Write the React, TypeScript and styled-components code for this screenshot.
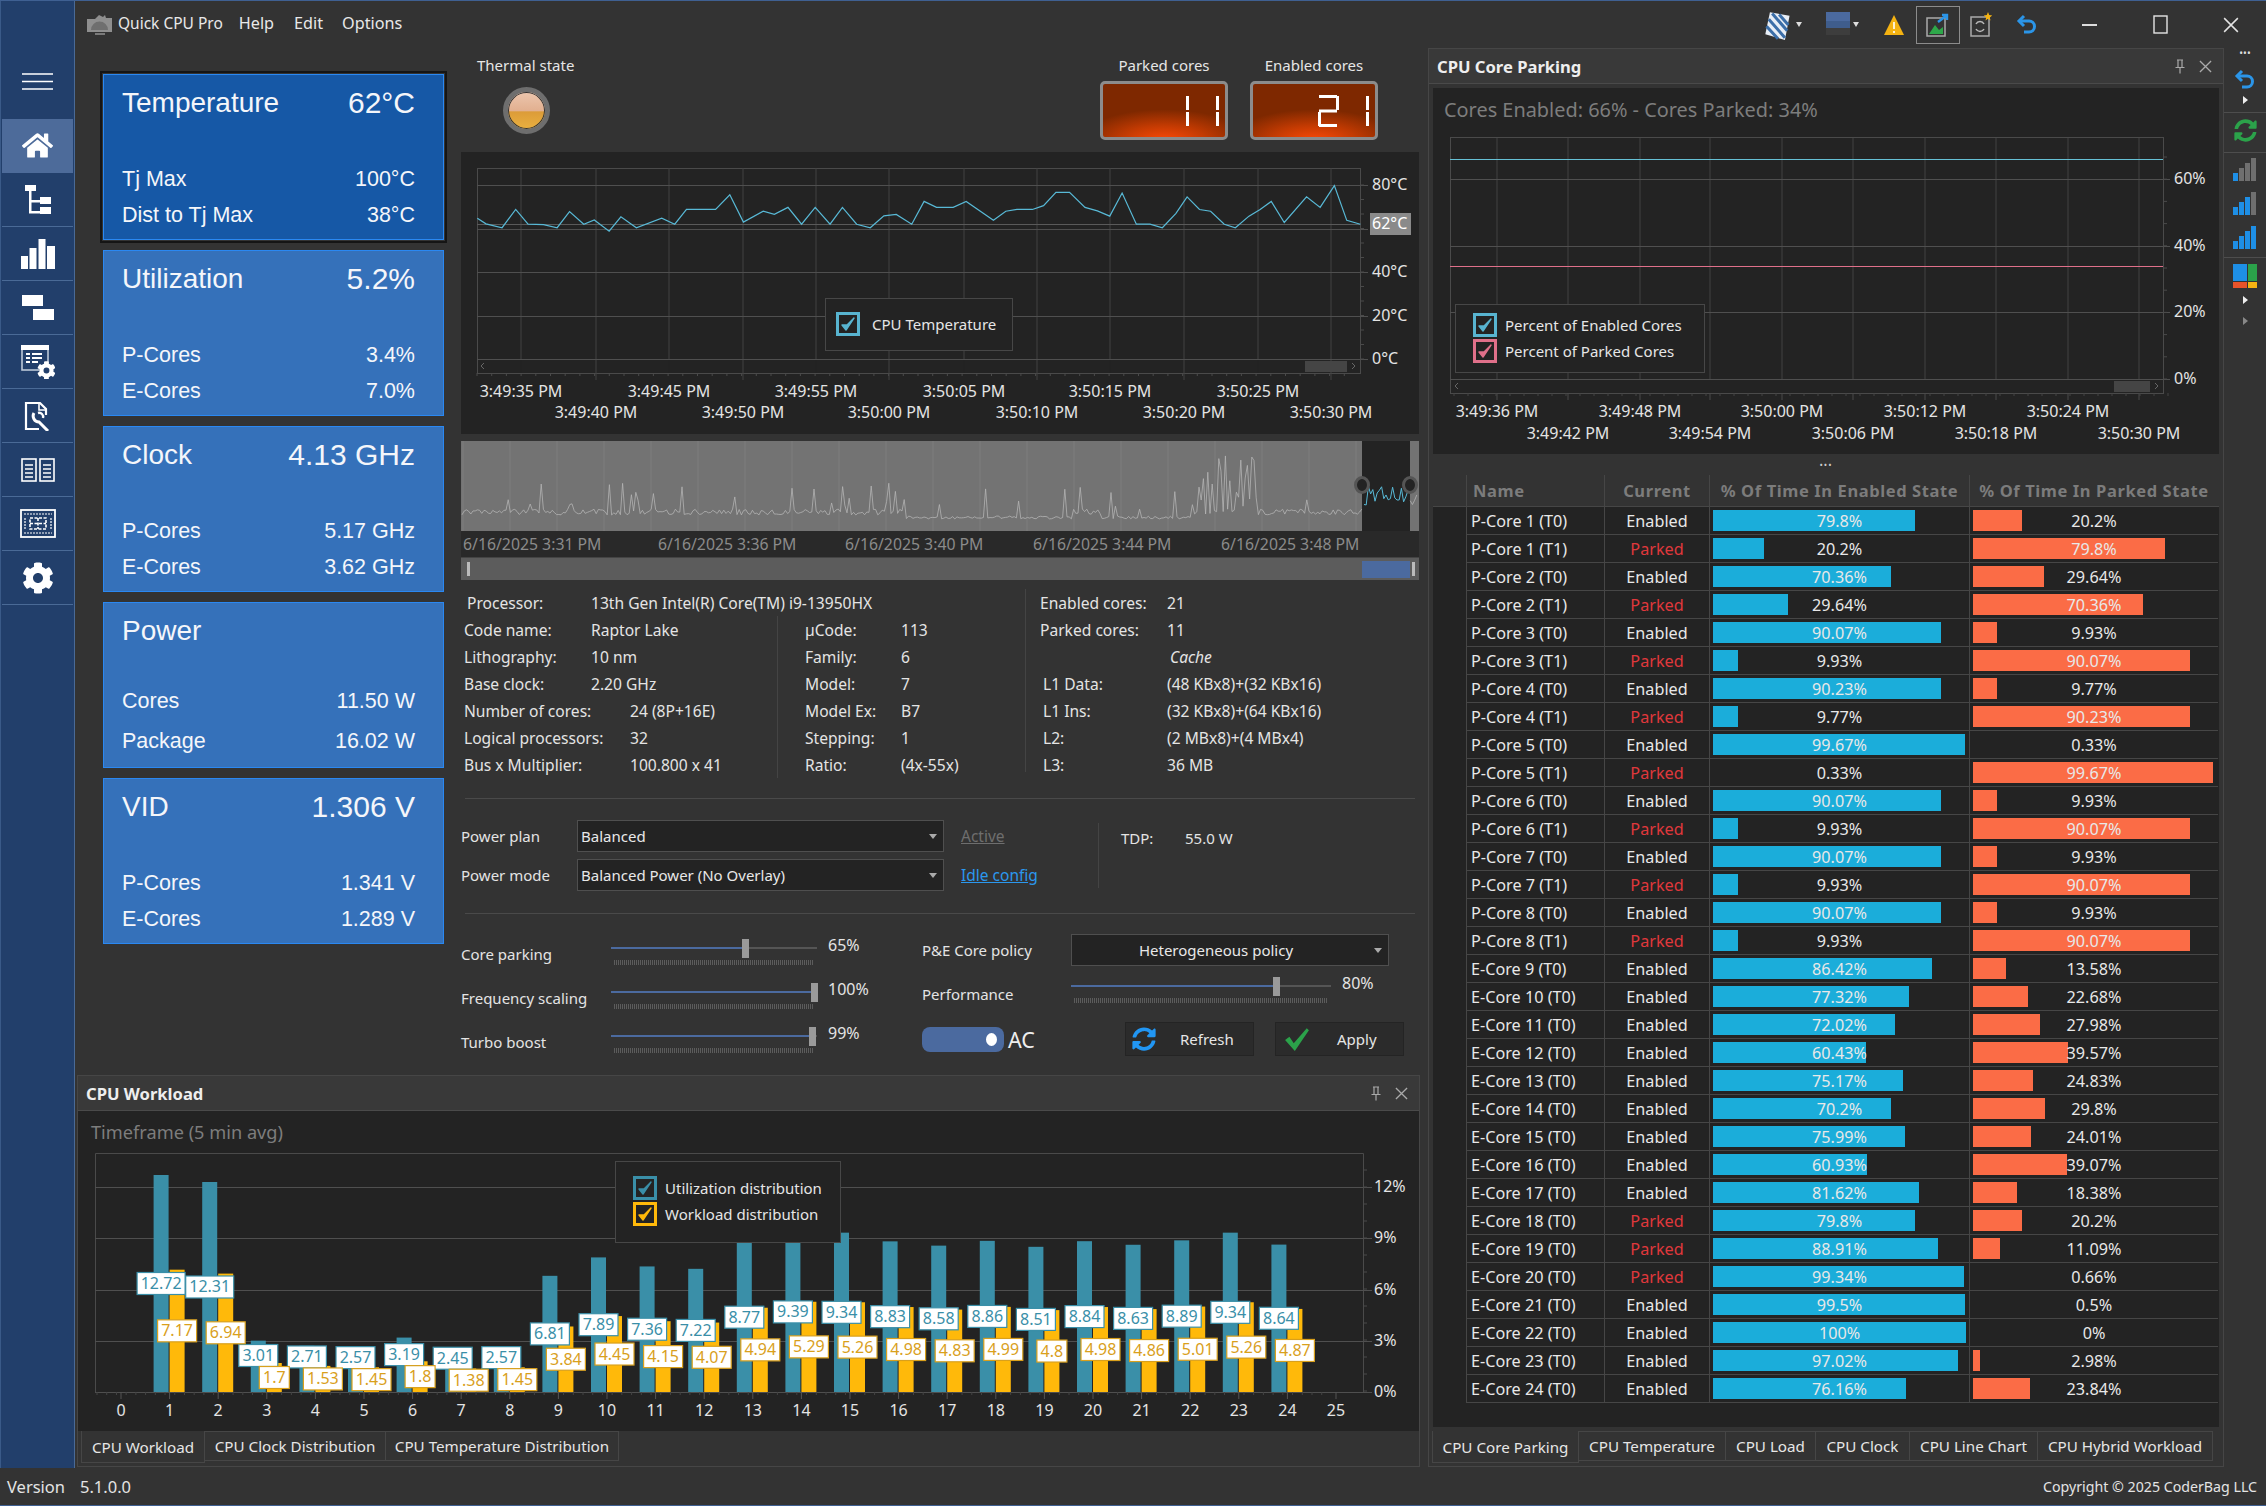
import React from "react";
import styled, { createGlobalStyle } from "styled-components";
import { FaHome, FaCog, FaSyncAlt } from "react-icons/fa";

const UI = `"Noto Sans", "Liberation Sans", sans-serif`;

const Global = createGlobalStyle`
  html, body { margin: 0; padding: 0; background: #333; }
  * { box-sizing: border-box; }
  body { font-family: ${UI}; font-size: 15px; color: #eee; }
`;

/* ---------- data ---------- */
const cards = [
  { title: "Temperature", value: "62°C", rows: [["Tj Max", "100°C"], ["Dist to Tj Max", "38°C"]], selected: true },
  { title: "Utilization", value: "5.2%", rows: [["P-Cores", "3.4%"], ["E-Cores", "7.0%"]] },
  { title: "Clock", value: "4.13 GHz", rows: [["P-Cores", "5.17 GHz"], ["E-Cores", "3.62 GHz"]] },
  { title: "Power", value: "", rows: [["Cores", "11.50 W"], ["Package", "16.02 W"]], tall: true },
  { title: "VID", value: "1.306 V", rows: [["P-Cores", "1.341 V"], ["E-Cores", "1.289 V"]] },
];

const corePct: [string, string, number][] = [
  ["P-Core 1 (T0)", "Enabled", 79.8], ["P-Core 1 (T1)", "Parked", 20.2], ["P-Core 2 (T0)", "Enabled", 70.36], ["P-Core 2 (T1)", "Parked", 29.64],
  ["P-Core 3 (T0)", "Enabled", 90.07], ["P-Core 3 (T1)", "Parked", 9.93], ["P-Core 4 (T0)", "Enabled", 90.23], ["P-Core 4 (T1)", "Parked", 9.77],
  ["P-Core 5 (T0)", "Enabled", 99.67], ["P-Core 5 (T1)", "Parked", 0.33], ["P-Core 6 (T0)", "Enabled", 90.07], ["P-Core 6 (T1)", "Parked", 9.93],
  ["P-Core 7 (T0)", "Enabled", 90.07], ["P-Core 7 (T1)", "Parked", 9.93], ["P-Core 8 (T0)", "Enabled", 90.07], ["P-Core 8 (T1)", "Parked", 9.93],
  ["E-Core 9 (T0)", "Enabled", 86.42], ["E-Core 10 (T0)", "Enabled", 77.32], ["E-Core 11 (T0)", "Enabled", 72.02], ["E-Core 12 (T0)", "Enabled", 60.43],
  ["E-Core 13 (T0)", "Enabled", 75.17], ["E-Core 14 (T0)", "Enabled", 70.2], ["E-Core 15 (T0)", "Enabled", 75.99], ["E-Core 16 (T0)", "Enabled", 60.93],
  ["E-Core 17 (T0)", "Enabled", 81.62], ["E-Core 18 (T0)", "Parked", 79.8], ["E-Core 19 (T0)", "Parked", 88.91], ["E-Core 20 (T0)", "Parked", 99.34],
  ["E-Core 21 (T0)", "Enabled", 99.5], ["E-Core 22 (T0)", "Enabled", 100], ["E-Core 23 (T0)", "Enabled", 97.02], ["E-Core 24 (T0)", "Enabled", 76.16],
];

const util = [12.72, 12.31, 3.01, 2.71, 2.57, 3.19, 2.45, 2.57, 6.81, 7.89, 7.36, 7.22, 8.77, 9.39, 9.34, 8.83, 8.58, 8.86, 8.51, 8.84, 8.63, 8.89, 9.34, 8.64];
const work = [7.17, 6.94, 1.7, 1.53, 1.45, 1.8, 1.38, 1.45, 3.84, 4.45, 4.15, 4.07, 4.94, 5.29, 5.26, 4.98, 4.83, 4.99, 4.8, 4.98, 4.86, 5.01, 5.26, 4.87];

// temperature trace, read off the picture in zoom coords
const tempZoom = [[28,508],[42,524],[68,535],[90,483],[110,525],[135,526],[157,535],[177,489],[200,525],[217,513],[241,545],[260,504],[285,535],[326,508],[347,525],[366,483],[413,483],[436,441],[458,519],[490,488],[508,497],[530,477],[552,525],[574,477],[598,525],[618,477],[641,525],[663,535],[685,501],[705,497],[730,525],[750,460],[770,477],[797,477],[818,460],[862,514],[882,488],[900,483],[925,483],[943,472],[963,434],[985,434],[1010,477],[1030,487],[1050,502],[1070,436],[1093,525],[1115,525],[1135,535],[1157,494],[1175,447],[1195,483],[1213,488],[1235,525],[1253,535],[1275,502],[1293,483],[1311,460],[1332,520],[1368,447],[1390,477],[1413,415],[1433,514],[1455,525]];
const tempPts = tempZoom.map(([x, y]) => `${460 + x / 1.616},${40 + y / 2.85}`).join(" ");

// seeded noise for the overview strip
let seed = 4711;
const rnd = () => { seed = (seed * 16807) % 2147483647; return seed / 2147483647; };
const miniPts: [number, number][] = [];
for (let x = 0; x <= 957; x += 2.2) {
  const hot = x > 735 && x < 795;
  const low = (x > 440 && x < 610) || (x > 640 && x < 730);
  let h = rnd() * (low ? 3 : 6);
  if (rnd() < (hot ? 0.5 : 0.075)) h = 8 + rnd() * (hot ? 52 : 24);
  if (x > 900) h = 8 + rnd() * 22;
  const base = low ? 78 : 74;
  miniPts.push([462 + x, 441 + base - h]);
}
const ptsOf = (a: [number, number][]) => a.map(p => p.join(",")).join(" ");

const range = (n: number) => Array.from({ length: n }, (_, i) => i);

/* ---------- shell ---------- */
const Stage = styled.div`
  width: 2266px; height: 1506px; overflow: hidden;
  background: #333; border-top: 1px solid #3f6092; border-bottom: 1px solid #3f6092;
  display: flex; flex-direction: column;
`;
const Main = styled.div`display: flex; height: 1467px;`;
const Sidebar = styled.nav`
  width: 75px; flex: none; background: #223f6b;
  border-left: 1px solid #3a5a88; border-right: 1px solid #4a6a96;
`;
const Burger = styled.div`
  height: 118px; padding-top: 42px; display: flex; align-items: center; justify-content: center;
`;
const NavItem = styled.div<{ $active?: boolean }>`
  height: 54px; margin: 0 1px; display: flex; align-items: center; justify-content: center;
  background: ${p => (p.$active ? "#4d6b9a" : "transparent")};
  border-bottom: 1px solid ${p => (p.$active ? "#4d6b9a" : "#4a6a96")};
`;
const Content = styled.div`flex: 1; display: flex; flex-direction: column; min-width: 0;`;
const TopBar = styled.header`height: 47px; display: flex; align-items: center; flex: none;`;
const LogoSlot = styled.div`margin-left: 12px; width: 31px; display: flex;`;
const MenuItem = styled.span<{ $ml: number; $size: number }>`
  margin-left: ${p => p.$ml}px; font-size: ${p => p.$size}px; color: #e8e8e8; margin-bottom: 3px;
`;
const TopTools = styled.div`margin-left: auto; display: flex; align-items: center; height: 100%;`;
const ToolSlot = styled.div<{ $w: number; $ml?: number; $boxed?: boolean }>`
  width: ${p => p.$w}px; margin-left: ${p => p.$ml || 0}px; height: ${p => (p.$boxed ? "38px" : "100%")};
  display: flex; align-items: center; justify-content: center; gap: 3px;
  border: ${p => (p.$boxed ? "1px solid #8c8c8c" : "none")};
`;
const Caret = styled.span`
  width: 0; height: 0; border-left: 3.5px solid transparent; border-right: 3.5px solid transparent; border-top: 5px solid #ddd;
`;
const Workspace = styled.div`flex: 1; display: flex; min-height: 0;`;
const LeftArea = styled.div`width: 1345px; flex: none; display: flex; flex-direction: column;`;
const Upper = styled.div`height: 1027px; flex: none; display: flex;`;

/* ---------- cards ---------- */
const CardColumn = styled.div`
  margin-left: 28px; width: 341px; flex: none; padding-top: 26px; display: flex; flex-direction: column; gap: 10px;
`;
const Card = styled.section<{ $selected?: boolean }>`
  height: 166px; display: flex; flex-direction: column; padding: 0 28px 6px 18px;
  font-family: "Liberation Sans", Arial, sans-serif; color: #f4f6fa;
  background: ${p => (p.$selected ? "#1658a6" : "#3571ba")}; border: 1px solid #2a88f2;
  box-shadow: ${p => (p.$selected ? "0 0 0 1px #333, 0 0 0 3px #151515" : "none")};
`;
const CardHead = styled.div`
  height: 56px; display: flex; align-items: center; justify-content: space-between; margin-bottom: auto;
`;
const CardTitle = styled.span`font-size: 28px;`;
const CardValue = styled.span`font-size: 30px;`;
const CardRow = styled.div<{ $tall?: boolean }>`
  height: ${p => (p.$tall ? 40 : 36)}px; display: flex; align-items: center; justify-content: space-between; font-size: 21.5px;
`;

/* ---------- centre ---------- */
const Center = styled.div`margin-left: 17px; width: 958px; flex: none; display: flex; flex-direction: column;`;
const GaugeRow = styled.div`height: 104px; flex: none; display: flex; justify-content: space-between; padding: 8px 41px 0 16px;`;
const Caption = styled.div`height: 18px; line-height: 18px; font-size: 15px; color: #e6e6e6; white-space: nowrap;`;
const Orb = styled.div`
  width: 47px; height: 47px; margin: 13px 0 0 26px; border-radius: 50%;
  border: 5px solid #6e6e6e; box-shadow: inset 0 0 0 1px #333;
  background: linear-gradient(#ecc6ae 0, #e2b090 50%, #dc9c38 54%, #eab040 100%);
`;
const Displays = styled.div`display: flex; gap: 22px;`;
const DisplayBlock = styled.div`width: 128px; text-align: center;`;
const Display = styled.div`
  margin-top: 7px; height: 59px; padding-right: 6px; display: flex; justify-content: flex-end; align-items: center; gap: 9px;
  border: 3px solid #8c8c8c; border-radius: 5px;
  background: radial-gradient(ellipse 70% 60% at 50% 108%, #ff4a08 0, #c23a02 50%, #7e2800 100%);
`;

const SEGS: Record<string, string[]> = { "1": ["b", "c"], "2": ["a", "b", "g", "e", "d"] };
const SegRect: Record<string, [number, number, number, number]> = {
  a: [1, 0, 18, 3], b: [18, 1, 3, 14], c: [18, 17, 3, 14], d: [1, 29, 18, 3], e: [0, 17, 3, 14], g: [1, 14.5, 18, 3],
};
const SegDigit = ({ d }: { d: string }) => (
  <svg width="21" height="32" viewBox="0 0 21 32">
    {SEGS[d].map(s => { const [x, y, w, h] = SegRect[s]; return <rect key={s} x={x} y={y} width={w} height={h} fill="#fff" />; })}
  </svg>
);

const ChartBox = styled.div<{ $h: number }>`
  position: relative; height: ${p => p.$h}px; background: #232323; flex: none;
`;
const Plot = styled.svg`
  display: block;
  text { font-family: ${UI}; font-size: 16px; fill: #e4e4e4; }
`;
const Legend = styled.div<{ $l: number; $t: number; $w: number; $h: number }>`
  position: absolute; left: ${p => p.$l}px; top: ${p => p.$t}px; width: ${p => p.$w}px; height: ${p => p.$h}px;
  background: #232323; border: 1px solid #474747; padding: 0 0 2px ${p => (p.$w < 200 ? 10 : 17)}px;
  display: flex; flex-direction: column; justify-content: center; gap: 2px;
`;
const LegendRow = styled.div<{ $gap?: number }>`
  display: flex; align-items: center; gap: ${p => p.$gap || 8}px; height: 24px; font-size: 15px; color: #e6e6e6; white-space: nowrap;
`;
const Check = styled.span<{ $c: string }>`
  width: 24px; height: 24px; flex: none; border: 3px solid ${p => p.$c}; color: ${p => p.$c};
  display: flex; align-items: center; justify-content: center;
`;
const Tick = () => (
  <svg width="16" height="16" viewBox="0 0 16 16"><path d="M2 9l4 5 8-12-7 7z" fill="currentColor" stroke="currentColor" strokeWidth="1.4" strokeLinejoin="round" /></svg>
);

const Overview = styled.div`margin-top: 7px; flex: none; display: flex; flex-direction: column;`;
const DateRow = styled.div`
  height: 26px; background: #292929; display: flex; align-items: center; color: #8b8b8b; font-size: 15.8px;
`;
const DateLabel = styled.span<{ $ml: number }>`margin-left: ${p => p.$ml}px; width: 0; white-space: nowrap;`;
const RangeBar = styled.div`height: 23px; background: #5c5c5c; display: flex; align-items: center; border-top: 1px solid #444;`;
const RangeGrip = styled.span<{ $ml: number }>`width: 3px; height: 14px; background: #bbb; margin-left: ${p => p.$ml}px;`;
const RangeThumb = styled.span`width: 48px; height: 17px; background: #4b6a9f; margin-left: 892px;`;

/* info */
const InfoGrid = styled.div`display: flex; padding-top: 9px; height: 198px; flex: none;`;
const InfoLeft = styled.div`width: 565px; flex: none; border-right: 1px solid #444; margin-bottom: 6px;`;
const InfoSub = styled.div`display: flex;`;
const InfoCol = styled.div<{ $w: number; $pl: number; $line?: boolean }>`
  width: ${p => p.$w}px; padding-left: ${p => p.$pl}px; flex: none;
  border-right: ${p => (p.$line ? "1px solid #444" : "none")};
`;
const InfoRow = styled.div<{ $lw: number; $pl?: number }>`
  height: 27px; display: flex; align-items: center; padding-left: ${p => p.$pl || 0}px; font-size: 15.6px; color: #e4e4e4; white-space: nowrap;
  & > span:first-child { width: ${p => p.$lw}px; flex: none; }
`;
const CacheHead = styled.span`font-style: italic;`;
const Rule = styled.div<{ $mt: number }>`height: 1px; background: #4a4a4a; margin: ${p => p.$mt}px 4px 0; flex: none;`;

/* power */
const PowerArea = styled.div`display: flex; margin-top: 21px; height: 71px; flex: none;`;
const PowerRows = styled.div`width: 637px; flex: none; display: flex; flex-direction: column; gap: 7px;`;
const PowerRow = styled.div`display: flex; align-items: center; height: 32px;`;
const FieldLabel = styled.span<{ $w: number }>`width: ${p => p.$w}px; flex: none; font-size: 15px; color: #e4e4e4; white-space: nowrap;`;
const Combo = styled.div<{ $w: number; $center?: boolean }>`
  width: ${p => p.$w}px; height: 32px; flex: none; background: #232323; border: 1px solid #4f4f4f;
  display: flex; align-items: center; padding: ${p => (p.$center ? "0 6px 0 0" : "0 6px 0 3px")}; font-size: 15px; color: #e8e8e8; white-space: nowrap;
  & > span:first-child { flex: 1; text-align: ${p => (p.$center ? "center" : "left")}; padding-right: ${p => (p.$center ? "14px" : 0)}; }
  & > i { width: 0; height: 0; border-left: 4px solid transparent; border-right: 4px solid transparent; border-top: 5px solid #aaa; }
`;
const PowerLink = styled.span<{ $on?: boolean }>`
  margin-left: 17px; font-size: 15.5px; text-decoration: underline; color: ${p => (p.$on ? "#2b98ee" : "#6e6e6e")};
`;
const TdpCol = styled.div`
  height: 65px; margin-top: 3px; border-left: 1px solid #444; padding: 5px 0 0 22px; display: flex; font-size: 15px; color: #e4e4e4;
  & > span:first-child { width: 64px; }
`;

/* controls */
const Controls = styled.div`display: flex; margin-top: 20px; flex: none;`;
const CtrlLeft = styled.div`width: 461px; flex: none;`;
const CtrlRight = styled.div`width: 482px; flex: none;`;
const SliderRow = styled.div<{ $h: number }>`display: flex; height: ${p => p.$h}px;`;
const SliderLabel = styled.span<{ $w: number; $pt?: number }>`
  width: ${p => p.$w}px; flex: none; padding-top: ${p => p.$pt || 10}px; line-height: 20px; font-size: 15px; color: #e4e4e4; white-space: nowrap;
`;
const Slider = styled.div<{ $w: number }>`position: relative; width: ${p => p.$w}px; height: 36px; flex: none;`;
const Track = styled.div`
  position: absolute; left: 0; right: 0; top: 13px; height: 2px; background: #555;
`;
const TrackFill = styled.div`position: absolute; left: 0; top: 13px; height: 2px; background: #4b6a9f;`;
const Thumb = styled.div`position: absolute; top: 5px; width: 7px; height: 19px; background: #9a9a9a; margin-left: -3px;`;
const Ticks = styled.div`
  position: absolute; left: 3px; right: 3px; top: 26px; height: 5px;
  background: repeating-linear-gradient(90deg, #5c5c5c 0 1px, transparent 1px 2px);
`;
const SliderValue = styled.span`margin-left: 11px; line-height: 22px; font-size: 16px; color: #e4e4e4; white-space: nowrap;`;
const ActionRow = styled.div`display: flex; align-items: center; height: 34px;`;
const Toggle = styled.div`
  width: 82px; height: 25px; border-radius: 8px; background: #4b6a9f; display: flex; align-items: center; justify-content: flex-end; padding-right: 7px;
  &::after { content: ""; width: 11px; height: 13px; border-radius: 50%; background: #fff; }
`;
const AcText = styled.span`margin-left: 4px; font-size: 21.5px; color: #eee; width: 30px;`;
const ActionButton = styled.button<{ $ml: number }>`
  width: 129px; height: 34px; margin-left: ${p => p.$ml}px; background: #2b2b2b; border: 1px solid #242424; color: #e6e6e6;
  font: 15px ${UI}; display: flex; align-items: center; padding: 0 0 0 6px;
`;
const ButtonText = styled.span<{ $ml: number }>`margin-left: ${p => p.$ml}px;`;

/* docked panels */
const Dock = styled.section<{ $w: number; $ml: number; $h: number }>`
  width: ${p => p.$w}px; height: ${p => p.$h}px; margin-left: ${p => p.$ml}px; flex: none;
  border: 1px solid #464646; display: flex; flex-direction: column; background: #333;
`;
const DockHead = styled.div`
  height: 35px; flex: none; padding: 0 11px 0 8px; display: flex; align-items: center;
  background: #393939; border-bottom: 1px solid #4a4a4a; font-weight: 700; font-size: 16.6px; color: #eee;
`;
const HeadIcons = styled.div`margin-left: auto; display: flex; align-items: center; gap: 13px; color: #aaa;`;
const ChartTitle = styled.div<{ $size: number; $pl: number }>`
  height: 42px; display: flex; align-items: center; padding-left: ${p => p.$pl}px; font-size: ${p => p.$size}px; color: #7d7d7d;
`;
const TabBar = styled.div<{ $ml: number; $mt?: number }>`
  display: flex; margin-left: ${p => p.$ml}px; margin-top: ${p => p.$mt || 0}px; height: 32px; flex: none;
`;
const Tab = styled.div<{ $w: number; $active?: boolean }>`
  width: ${p => p.$w}px; height: ${p => (p.$active ? 32 : 30)}px; display: flex; align-items: center; justify-content: center;
  border: 1px solid #464646; border-top: ${p => (p.$active ? "none" : "1px solid #464646")}; margin-left: -1px;
  font-size: 15.2px; color: #e6e6e6; white-space: nowrap; background: #333;
`;

const ParkChart = styled.div`
  position: relative; margin: 4px 4px 0; height: 366px; background: #232323; flex: none;
`;
const Splitter = styled.div`height: 21px; flex: none; display: flex; align-items: center; justify-content: center; font-size: 9px; color: #ccc; letter-spacing: 1px;`;
const CoreTable = styled.div`margin: 0 4px; height: 952px; flex: none; background: #232323;`;
const ROW_COLS = "33px 138px 105px 260px 249px";
const HeadRow = styled.div`
  display: grid; grid-template-columns: ${ROW_COLS}; height: 32px; background: #333; border-bottom: 1px solid #464646;
  font-size: 16.5px; font-weight: 700; color: #7c7c7c; white-space: nowrap; letter-spacing: 0.6px;
`;
const HeadCell = styled.div<{ $left?: boolean }>`
  border-left: 1px solid #464646; display: flex; align-items: center; padding-left: ${p => (p.$left ? "6px" : 0)};
  justify-content: ${p => (p.$left ? "flex-start" : "center")};
`;
const RowHead = styled.div``;
const CoreRow = styled.div`display: grid; grid-template-columns: ${ROW_COLS}; height: 28px; font-size: 16.2px; color: #e8e8e8;`;
const Cell = styled.div<{ $left?: boolean; $red?: boolean }>`
  position: relative; display: flex; align-items: center; white-space: nowrap;
  border-left: 1px solid #464646; border-bottom: 1px solid #464646;
  padding-left: ${p => (p.$left ? "4px" : 0)}; justify-content: ${p => (p.$left ? "flex-start" : "center")};
  color: ${p => (p.$red ? "#e0383c" : "inherit")};
`;
const DataBar = styled.div<{ $c: string }>`
  position: absolute; left: 3px; top: 3px; bottom: 3px; background: ${p => p.$c};
`;
const CellText = styled.span`position: relative;`;

const Strip = styled.aside`width: 42px; flex: none; display: flex; flex-direction: column; align-items: center;`;
const Slot = styled.div<{ $h: number; $mt?: number; $rule?: boolean }>`
  height: ${p => p.$h}px; margin-top: ${p => p.$mt || 0}px; flex: none; width: 100%; display: flex; align-items: center; justify-content: center;
  color: #ddd; font-size: 10px;
  border-bottom: ${p => (p.$rule ? "1px solid #4d4d4d" : "none")};
`;
const StripArrow = styled.span<{ $dim?: boolean }>`
  width: 0; height: 0; border-top: 4px solid transparent; border-bottom: 4px solid transparent;
  border-left: 5px solid ${p => (p.$dim ? "#888" : "#eee")};
`;

const StatusBar = styled.footer`
  flex: 1; display: flex; align-items: center; padding: 0 9px 0 7px; font-size: 16.5px; color: #e4e4e4;
`;
const StatusVersion = styled.span`width: 73px;`;
const Copyright = styled.span`margin-left: auto; font-size: 14.2px;`;

/* ---------- small drawings ---------- */
const X = ({ s = 13, w = 1.4 }: { s?: number; w?: number }) => (
  <svg width={s} height={s} viewBox="0 0 14 14"><path d="M1 1l12 12M13 1L1 13" stroke="currentColor" strokeWidth={w} fill="none" /></svg>
);
const Pin = () => (
  <svg width="12" height="15" viewBox="0 0 12 15" fill="none" stroke="currentColor" strokeWidth="1.2">
    <path d="M3 1h6M4 1v7M8 1v7M1.5 8.5h9M6 9v5.5" />
  </svg>
);
const BarsIcon = ({ on }: { on: number }) => (
  <svg width="24" height="24" viewBox="0 0 24 24">
    {[8, 13, 18, 23].map((h, i) => <rect key={i} x={i * 6} y={23 - h} width="5" height={h} fill={i < on ? "#1e8fe6" : "#6f6f6f"} />)}
  </svg>
);
const UndoIcon = ({ s = 24 }: { s?: number }) => (
  <svg width={s} height={s} viewBox="0 0 24 24" fill="none" stroke="#2b95e8" strokeWidth="3">
    <path d="M9 3L4 8l5 5" /><path d="M4 8h10a5.5 5.5 0 0 1 0 11H9" />
  </svg>
);

const navIcons = [
  <FaHome key="h" size={31} color="#fff" />,
  <svg key="t" width="26" height="30" viewBox="0 0 26 30" fill="#fff"><rect x="0" y="0" width="11" height="6" /><rect x="4" y="6" width="2.5" height="22" /><rect x="4" y="15" width="11" height="2.5" /><rect x="4" y="26" width="11" height="2.5" /><rect x="15" y="12" width="11" height="7" /><rect x="15" y="22" width="11" height="7" /></svg>,
  <svg key="b" width="34" height="30" viewBox="0 0 34 30" fill="#fff"><rect x="0" y="17" width="7" height="13" /><rect x="8.5" y="9" width="7" height="21" /><rect x="17.5" y="0" width="7" height="30" /><rect x="26" y="7" width="8" height="23" /></svg>,
  <svg key="g" width="32" height="25" viewBox="0 0 32 25" fill="#fff"><rect x="0" y="0" width="21" height="11" /><rect x="11" y="14" width="21" height="11" /></svg>,
  <svg key="s" width="34" height="34" viewBox="0 0 34 34"><rect x="1" y="1" width="26" height="24" fill="none" stroke="#bcc8d8" strokeWidth="1.6" /><rect x="0" y="0" width="28" height="5" fill="#fff" /><path d="M5 9h4M11 9h10M5 13h4M11 13h10M5 17h4M11 17h6" stroke="#fff" strokeWidth="2" /><circle cx="25" cy="25" r="7" fill="#223f6b" /><g transform="translate(16 16) scale(.037)"><path fill="#fff" d="M487 315l-43-25c4-23 4-46 0-69l43-25c5-3 7-9 5-14-11-36-30-68-55-95-4-4-10-5-15-2l-43 25c-18-15-38-27-60-35V25c0-6-4-10-9-11-37-8-75-8-111 0-5 1-9 6-9 11v50c-22 8-42 20-60 35L87 85c-5-3-11-2-15 2-25 27-44 59-55 95-2 5 0 11 5 14l43 25c-4 23-4 46 0 69l-43 25c-5 3-7 9-5 14 11 36 30 68 55 95 4 4 10 5 15 2l43-25c18 15 38 27 60 35v50c0 5 4 10 9 11 37 8 75 8 111 0 5-1 9-6 9-11v-50c22-8 42-20 60-35l43 25c5 3 11 2 15-2 25-27 44-59 55-95 2-5 0-11-5-14zM256 336a80 80 0 1 1 0-160 80 80 0 0 1 0 160z" /></g></svg>,
  <svg key="d" width="28" height="30" viewBox="0 0 28 30" fill="none" stroke="#fff" strokeWidth="2.2"><path d="M15 28H2V2h14l6 6v6" /><path d="M15 2v7h7" strokeWidth="1.6" /><path d="M10 12a6 6 0 0 0 5 9l9 9" strokeWidth="3" /><path d="M14 12a4 4 0 0 1 5 5" strokeWidth="2.4" /></svg>,
  <svg key="c" width="34" height="24" viewBox="0 0 34 24" fill="none" stroke="#fff" strokeWidth="1.6"><rect x="1" y="1" width="14" height="22" /><rect x="19" y="1" width="14" height="22" /><path d="M4 7h8M4 11h8M4 15h8M4 19h8M22 7h8M22 11h8M22 15h8M22 19h8" /></svg>,
  <svg key="m" width="36" height="29" viewBox="0 0 36 29" fill="none" stroke="#fff"><rect x="1" y="1" width="34" height="27" strokeWidth="1.8" /><path d="M4 5h28M4 24h28M5 9v11M31 9v11" strokeWidth="1.2" strokeDasharray="2 1" /><path d="M10 9h16v11H10zM10 14.5h16M18 9v11" strokeWidth="1.6" strokeDasharray="3 1.5" /></svg>,
  <FaCog key="o" size={32} color="#fff" />,
];

/* ---------- charts ---------- */
const TemperaturePlot = () => {
  const xs = [521, 596, 669, 743, 816, 889, 964, 1037, 1110, 1184, 1258, 1331];
  const times = ["3:49:35 PM", "3:49:40 PM", "3:49:45 PM", "3:49:50 PM", "3:49:55 PM", "3:50:00 PM", "3:50:05 PM", "3:50:10 PM", "3:50:15 PM", "3:50:20 PM", "3:50:25 PM", "3:50:30 PM"];
  const ys: [number, string][] = [[185, "80°C"], [229, ""], [272, "40°C"], [316, "20°C"], [359, "0°C"]];
  return (
    <Plot width={958} height={282} viewBox="461 152 958 282">
      <rect x="477.5" y="168.5" width="883" height="205" fill="none" stroke="#4a4a4a" />
      {xs.map((x, i) => <line key={x} x1={x} x2={x} y1={168} y2={i % 2 ? 380 : 359} stroke="#434343" />)}
      {xs.map((x, i) => i % 2 === 0 ? <line key={x} x1={x} x2={x} y1={359} y2={373} stroke="#232323" /> : null)}
      {ys.map(([y]) => <line key={y} x1={477} x2={1368} y1={y + 0.5} y2={y + 0.5} stroke="#4f4f4f" />)}
      <line x1={477} x2={1360} y1={224.5} y2={224.5} stroke="#5a5a5a" />
      {range(13).map(i => <line key={i} x1={1360} x2={1364} y1={185 + i * 14.5} y2={185 + i * 14.5} stroke="#4a4a4a" />)}
      {range(60).map(i => <line key={i} x1={477 + i * 14.7} x2={477 + i * 14.7} y1={373} y2={376} stroke="#4a4a4a" />)}
      <polyline points={tempPts} fill="none" stroke="#58b9d6" strokeWidth="1.2" />
      <rect x="1305" y="361" width="42" height="11" fill="#454545" />
      <path d="M484 363l-3 3 3 3M1352 363l3 3-3 3" stroke="#666" fill="none" />
      {ys.map(([y, t]) => t && <text key={t} x={1372} y={y + 5}>{t}</text>)}
      <rect x="1370" y="213" width="41" height="22" fill="#8a8a8a" />
      <text x={1372} y={229} style={{ fill: "#fff" }}>62°C</text>
      {times.map((t, i) => <text key={t} x={xs[i]} y={i % 2 ? 418 : 397} textAnchor="middle">{t}</text>)}
    </Plot>
  );
};

const MiniPlot = () => (
  <Plot width={958} height={90} viewBox="461 441 958 90">
    <rect x="461" y="441" width="958" height="90" fill="#737373" />
    {range(20).map(i => <line key={i} x1={463 + i * 47} x2={463 + i * 47} y1={441} y2={531} stroke="#7f7f7f" />)}
    <rect x="1362" y="441" width="48" height="90" fill="#232323" />
    <polyline points={ptsOf(miniPts.filter(p => p[0] <= 1362))} fill="none" stroke="#b4b4b4" strokeWidth="0.8" />
    <polyline points={ptsOf(miniPts.filter(p => p[0] >= 1362 && p[0] <= 1410))} fill="none" stroke="#58b9d6" />
    <polyline points={ptsOf(miniPts.filter(p => p[0] >= 1410))} fill="none" stroke="#b4b4b4" strokeWidth="0.8" />
    {[1362, 1410].map(x => <ellipse key={x} cx={x} cy={485} rx={6.5} ry={7.5} fill="#232323" stroke="#555" strokeWidth="3" />)}
  </Plot>
);

const ParkPlot = () => {
  const xs = [1497, 1568, 1640, 1710, 1782, 1853, 1925, 1996, 2068, 2139];
  const times = ["3:49:36 PM", "3:49:42 PM", "3:49:48 PM", "3:49:54 PM", "3:50:00 PM", "3:50:06 PM", "3:50:12 PM", "3:50:18 PM", "3:50:24 PM", "3:50:30 PM"];
  const ys: [number, string][] = [[179, "60%"], [246, "40%"], [312, "20%"], [379, "0%"]];
  return (
    <Plot width={786} height={324} viewBox="1433 130 786 324">
      <rect x="1450.5" y="137.5" width="713" height="256" fill="none" stroke="#4a4a4a" />
      {xs.map(x => <line key={x} x1={x} x2={x} y1={138} y2={379} stroke="#434343" />)}
      {xs.map((x, i) => <line key={i} x1={x} x2={x} y1={393} y2={400} stroke="#4a4a4a" />)}
      {range(52).map(i => <line key={i} x1={1454 + i * 14} x2={1454 + i * 14} y1={393} y2={396} stroke="#444" />)}
      {ys.map(([y]) => <line key={y} x1={1450} x2={2170} y1={y + 0.5} y2={y + 0.5} stroke="#4f4f4f" />)}
      {range(11).map(i => <line key={i} x1={2163} x2={2167} y1={157 + i * 22.2} y2={157 + i * 22.2} stroke="#4a4a4a" />)}
      <line x1={1450} x2={2163} y1={159.5} y2={159.5} stroke="#66c0d4" strokeWidth="1.2" />
      <line x1={1450} x2={2163} y1={266.5} y2={266.5} stroke="#e0708a" strokeWidth="1.2" />
      <rect x="2114" y="381" width="36" height="11" fill="#454545" />
      <path d="M1458 383l-3 3 3 3M2155 383l3 3-3 3" stroke="#666" fill="none" />
      {ys.map(([y, t]) => <text key={t} x={2174} y={y + 5}>{t}</text>)}
      {times.map((t, i) => <text key={t} x={xs[i]} y={i % 2 ? 439 : 417} textAnchor="middle">{t}</text>)}
    </Plot>
  );
};

const WorkloadPlot = () => {
  const xAt = (i: number) => 121 + i * 48.6;
  const ys: [number, string][] = [[1187, "12%"], [1238, "9%"], [1290, "6%"], [1341, "3%"], [1392, "0%"]];
  return (
    <Plot width={1341} height={278} viewBox="78 1153 1341 278">
      <path d="M95.5 1392V1153.5H1363.5V1392" fill="none" stroke="#4a4a4a" />
      {ys.map(([y]) => <line key={y} x1={95} x2={1372} y1={y + 0.5} y2={y + 0.5} stroke="#4f4f4f" />)}
      {range(14).map(i => <line key={i} x1={1363} x2={1367} y1={1170 + i * 17} y2={1170 + i * 17} stroke="#4a4a4a" />)}
      {range(26).map(i => <line key={i} x1={xAt(i)} x2={xAt(i)} y1={1392} y2={1399} stroke="#555" />)}
      {range(127).map(i => <line key={i} x1={97 + i * 9.72} x2={97 + i * 9.72} y1={1392} y2={1395} stroke="#444" />)}
      {util.map((v, i) => <rect key={i} x={xAt(i + 1) - 16} y={1392 - v * 17.06} width={15} height={v * 17.06} fill="#3a8fa8" />)}
      {work.map((v, i) => <rect key={i} x={xAt(i + 1)} y={1392 - v * 17.06} width={15} height={v * 17.06} fill="#ffb90a" />)}
      {util.map((v, i) => {
        const t = String(v);
        const w = t.length * 9 + 3;
        const yc = 1392 - work[i] * 8.53;
        const cy = v < 4 ? yc - 22 : 1392 - v * 8.53;
        const cx = xAt(i + 1) - 8.5;
        return (
          <g key={i}>
            <rect x={cx - w / 2} y={cy - 11} width={w} height={22} fill="#fff" stroke="#3a8fa8" strokeWidth="1.2" />
            <text x={cx} y={cy + 5.5} textAnchor="middle" style={{ fill: "#3a8fa8", fontSize: 16 }}>{t}</text>
          </g>
        );
      })}
      {work.map((v, i) => {
        const t = String(v);
        const w = t.length * 9 + 3;
        const cy = 1392 - v * 8.53;
        const cx = xAt(i + 1) + 7.5;
        return (
          <g key={i}>
            <rect x={cx - w / 2} y={cy - 11} width={w} height={22} fill="#fff" stroke="#d9a01c" strokeWidth="1.2" />
            <text x={cx} y={cy + 5.5} textAnchor="middle" style={{ fill: "#d9a01c", fontSize: 16 }}>{t}</text>
          </g>
        );
      })}
      {range(26).map(i => <text key={i} x={xAt(i)} y={1416} textAnchor="middle">{i}</text>)}
      {ys.map(([y, t]) => <text key={t} x={1374} y={y + 5}>{t}</text>)}
    </Plot>
  );
};

const Bound = ({ label, value, pct, w, lw }: { label: string; value: string; pct: number; w: number; lw: number }) => (
  <SliderRow $h={44}>
    <SliderLabel $w={lw}>{label}</SliderLabel>
    <Slider $w={w}>
      <Track />
      <TrackFill style={{ width: `${pct}%` }} />
      <Ticks />
      <Thumb style={{ left: `${pct}%` }} />
    </Slider>
    <SliderValue>{value}</SliderValue>
  </SliderRow>
);

export default function App() {
  return (
    <Stage>
      <Global />
      <Main>
        <Sidebar>
          <Burger>
            <svg width="31" height="17" viewBox="0 0 31 17" stroke="#fff" strokeWidth="1.3"><path d="M0 1h31M0 8.5h31M0 16h31" /></svg>
          </Burger>
          {navIcons.map((ic, i) => <NavItem key={i} $active={i === 0}>{ic}</NavItem>)}
        </Sidebar>
        <Content>
          <TopBar>
            <LogoSlot>
              <svg width="25" height="22" viewBox="0 0 25 22"><path d="M0 5h8l4-4 4 2 2-2 1 3h6v14H0z" fill="#8f8f8f" /><path d="M4 16a8 8 0 0 1 17 0z" fill="#6f6f6f" /><rect x="8" y="19" width="10" height="2" fill="#7a7a7a" /></svg>
            </LogoSlot>
            <MenuItem $ml={0} $size={15.5}>Quick CPU Pro</MenuItem>
            <MenuItem $ml={16} $size={16.2}>Help</MenuItem>
            <MenuItem $ml={20} $size={16.2}>Edit</MenuItem>
            <MenuItem $ml={19} $size={16.2}>Options</MenuItem>
            <TopTools>
              <ToolSlot $w={45}>
                <svg width="30" height="30" viewBox="0 0 26 26"><path d="M6 2l17 3-4 21L2 21z" fill="#e8eef6" /><path d="M8 3l13 15M5 8l14 16M14 4l8 9M3 14l10 11" stroke="#3b6ea8" strokeWidth="2.6" /></svg>
                <Caret />
              </ToolSlot>
              <ToolSlot $w={45} $ml={15}>
                <svg width="24" height="26" viewBox="0 0 24 26"><rect y="0" width="24" height="9" fill="#4b6a9f" /><rect y="9" width="24" height="7" fill="#3f5d8c" /><rect y="16" width="24" height="7" fill="#3d3d3d" /></svg>
                <Caret />
              </ToolSlot>
              <ToolSlot $w={28} $ml={15}>
                <svg width="22" height="22" viewBox="0 0 22 22"><path d="M11 1L21 21H1z" fill="#f5b312" /><path d="M11 8v7M11 17v2" stroke="#fff" strokeWidth="1.6" /></svg>
              </ToolSlot>
              <ToolSlot $w={44} $ml={8} $boxed>
                <svg width="26" height="26" viewBox="0 0 26 26" fill="none"><rect x="2" y="6" width="18" height="18" stroke="#aaa" strokeWidth="1.5" /><path d="M4 22l6-9 4 5 4-3v7z" fill="#2ea84a" /><path d="M13 10l8-6M17 3h5v5" stroke="#2b95e8" strokeWidth="2.4" /></svg>
              </ToolSlot>
              <ToolSlot $w={42}>
                <svg width="24" height="26" viewBox="0 0 24 26" fill="none"><rect x="2" y="5" width="18" height="19" stroke="#aaa" strokeWidth="1.5" /><path d="M7 12a4.5 4.5 0 0 1 8 0M15 17a4.5 4.5 0 0 1-8 0" stroke="#bbb" strokeWidth="1.5" /><path d="M19 0l1.2 3 3 .4-2.4 2 .7 3-2.5-1.6-2.5 1.6.7-3-2.4-2 3-.4z" fill="#f5b312" /></svg>
              </ToolSlot>
              <ToolSlot $w={42} $ml={4}><UndoIcon /></ToolSlot>
              <ToolSlot $w={71} $ml={6}><svg width="15" height="2" viewBox="0 0 15 2"><rect width="15" height="2" fill="#ddd" /></svg></ToolSlot>
              <ToolSlot $w={71}><svg width="15" height="19" viewBox="0 0 15 19"><rect x="1" y="1" width="13" height="17" fill="none" stroke="#e4e4e4" strokeWidth="1.4" /></svg></ToolSlot>
              <ToolSlot $w={70} style={{ color: "#e4e4e4" }}><X s={16} w={1.3} /></ToolSlot>
            </TopTools>
          </TopBar>
          <Workspace>
            <LeftArea>
              <Upper>
                <CardColumn>
                  {cards.map(c => (
                    <Card key={c.title} $selected={c.selected}>
                      <CardHead>
                        <CardTitle>{c.title}</CardTitle>
                        <CardValue>{c.value}</CardValue>
                      </CardHead>
                      {c.rows.map(r => (
                        <CardRow key={r[0]} $tall={c.tall}>
                          <span>{r[0]}</span>
                          <span>{r[1]}</span>
                        </CardRow>
                      ))}
                    </Card>
                  ))}
                </CardColumn>
                <Center>
                  <GaugeRow>
                    <div>
                      <Caption>Thermal state</Caption>
                      <Orb />
                    </div>
                    <Displays>
                      <DisplayBlock>
                        <Caption>Parked cores</Caption>
                        <Display aria-label="11"><SegDigit d="1" /><SegDigit d="1" /></Display>
                      </DisplayBlock>
                      <DisplayBlock>
                        <Caption>Enabled cores</Caption>
                        <Display aria-label="21"><SegDigit d="2" /><SegDigit d="1" /></Display>
                      </DisplayBlock>
                    </Displays>
                  </GaugeRow>
                  <ChartBox $h={282}>
                    <TemperaturePlot />
                    <Legend $l={364} $t={146} $w={188} $h={53}>
                      <LegendRow $gap={12}><Check $c="#58b4d0"><Tick /></Check>CPU Temperature</LegendRow>
                    </Legend>
                  </ChartBox>
                  <Overview>
                    <MiniPlot />
                    <DateRow>
                      <DateLabel $ml={2}>6/16/2025 3:31 PM</DateLabel>
                      <DateLabel $ml={195}>6/16/2025 3:36 PM</DateLabel>
                      <DateLabel $ml={187}>6/16/2025 3:40 PM</DateLabel>
                      <DateLabel $ml={188}>6/16/2025 3:44 PM</DateLabel>
                      <DateLabel $ml={188}>6/16/2025 3:48 PM</DateLabel>
                    </DateRow>
                    <RangeBar><RangeGrip $ml={6} /><RangeThumb /><RangeGrip $ml={2} /></RangeBar>
                  </Overview>
                  <InfoGrid>
                    <InfoLeft>
                      <InfoRow $lw={124} $pl={6}><span>Processor:</span><span>13th Gen Intel(R) Core(TM) i9-13950HX</span></InfoRow>
                      <InfoSub>
                        <InfoCol $w={317} $pl={3} $line>
                          <InfoRow $lw={127}><span>Code name:</span><span>Raptor Lake</span></InfoRow>
                          <InfoRow $lw={127}><span>Lithography:</span><span>10 nm</span></InfoRow>
                          <InfoRow $lw={127}><span>Base clock:</span><span>2.20 GHz</span></InfoRow>
                          <InfoRow $lw={166}><span>Number of cores:</span><span>24 (8P+16E)</span></InfoRow>
                          <InfoRow $lw={166}><span>Logical processors:</span><span>32</span></InfoRow>
                          <InfoRow $lw={166}><span>Bus x Multiplier:</span><span>100.800 x 41</span></InfoRow>
                        </InfoCol>
                        <InfoCol $w={247} $pl={27}>
                          <InfoRow $lw={96}><span>µCode:</span><span>113</span></InfoRow>
                          <InfoRow $lw={96}><span>Family:</span><span>6</span></InfoRow>
                          <InfoRow $lw={96}><span>Model:</span><span>7</span></InfoRow>
                          <InfoRow $lw={96}><span>Model Ex:</span><span>B7</span></InfoRow>
                          <InfoRow $lw={96}><span>Stepping:</span><span>1</span></InfoRow>
                          <InfoRow $lw={96}><span>Ratio:</span><span>(4x-55x)</span></InfoRow>
                        </InfoCol>
                      </InfoSub>
                    </InfoLeft>
                    <InfoCol $w={380} $pl={14}>
                      <InfoRow $lw={127}><span>Enabled cores:</span><span>21</span></InfoRow>
                      <InfoRow $lw={127}><span>Parked cores:</span><span>11</span></InfoRow>
                      <InfoRow $lw={130}><span /><CacheHead>Cache</CacheHead></InfoRow>
                      <InfoRow $lw={124} $pl={3}><span>L1 Data:</span><span>(48 KBx8)+(32 KBx16)</span></InfoRow>
                      <InfoRow $lw={124} $pl={3}><span>L1 Ins:</span><span>(32 KBx8)+(64 KBx16)</span></InfoRow>
                      <InfoRow $lw={124} $pl={3}><span>L2:</span><span>(2 MBx8)+(4 MBx4)</span></InfoRow>
                      <InfoRow $lw={124} $pl={3}><span>L3:</span><span>36 MB</span></InfoRow>
                    </InfoCol>
                  </InfoGrid>
                  <Rule $mt={20} />
                  <PowerArea>
                    <PowerRows>
                      <PowerRow>
                        <FieldLabel $w={116}>Power plan</FieldLabel>
                        <Combo $w={367}><span>Balanced</span><i /></Combo>
                        <PowerLink>Active</PowerLink>
                      </PowerRow>
                      <PowerRow>
                        <FieldLabel $w={116}>Power mode</FieldLabel>
                        <Combo $w={367}><span>Balanced Power (No Overlay)</span><i /></Combo>
                        <PowerLink $on>Idle config</PowerLink>
                      </PowerRow>
                    </PowerRows>
                    <TdpCol><span>TDP:</span><span>55.0 W</span></TdpCol>
                  </PowerArea>
                  <Rule $mt={22} />
                  <Controls>
                    <CtrlLeft>
                      <Bound label="Core parking" value="65%" pct={65} w={206} lw={150} />
                      <Bound label="Frequency scaling" value="100%" pct={98.5} w={206} lw={150} />
                      <Bound label="Turbo boost" value="99%" pct={97.5} w={206} lw={150} />
                    </CtrlLeft>
                    <CtrlRight>
                      <PowerRow>
                        <FieldLabel $w={149}>P&amp;E Core policy</FieldLabel>
                        <Combo $w={318} $center><span>Heterogeneous policy</span><i /></Combo>
                      </PowerRow>
                      <SliderRow $h={56}>
                        <SliderLabel $w={149} $pt={18}>Performance</SliderLabel>
                        <Slider $w={260} style={{ marginTop: 6 }}>
                          <Track />
                          <TrackFill style={{ width: "79%" }} />
                          <Ticks />
                          <Thumb style={{ left: "79%" }} />
                        </Slider>
                        <SliderValue style={{ marginTop: 6 }}>80%</SliderValue>
                      </SliderRow>
                      <ActionRow>
                        <Toggle />
                        <AcText>AC</AcText>
                        <ActionButton $ml={87}><FaSyncAlt size={24} color="#2196f3" /><ButtonText $ml={24}>Refresh</ButtonText></ActionButton>
                        <ActionButton $ml={21}>
                          <svg width="30" height="26" viewBox="0 0 26 24"><path d="M2 13l4-3 4 6L22 2l2 2L11 23z" fill="#2ba24a" /></svg>
                          <ButtonText $ml={25}>Apply</ButtonText>
                        </ActionButton>
                      </ActionRow>
                    </CtrlRight>
                  </Controls>
                </Center>
              </Upper>
              <Dock $w={1343} $ml={2} $h={392}>
                <DockHead>
                  CPU Workload
                  <HeadIcons><Pin /><X /></HeadIcons>
                </DockHead>
                <ChartBox $h={320}>
                  <ChartTitle $size={18.2} $pl={13}>Timeframe (5 min avg)</ChartTitle>
                  <WorkloadPlot />
                  <Legend $l={537} $t={50} $w={226} $h={82}>
                    <LegendRow><Check $c="#3a8fa8"><Tick /></Check>Utilization distribution</LegendRow>
                    <LegendRow><Check $c="#ffb90a"><Tick /></Check>Workload distribution</LegendRow>
                  </Legend>
                </ChartBox>
                <TabBar $ml={4}>
                  <Tab $w={124} $active>CPU Workload</Tab>
                  <Tab $w={182}>CPU Clock Distribution</Tab>
                  <Tab $w={234}>CPU Temperature Distribution</Tab>
                </TabBar>
              </Dock>
            </LeftArea>
            <Dock $w={796} $ml={8} $h={1419}>
              <DockHead>
                CPU Core Parking
                <HeadIcons><Pin /><X /></HeadIcons>
              </DockHead>
              <ParkChart>
                <ChartTitle $size={19.9} $pl={11}>Cores Enabled: 66% - Cores Parked: 34%</ChartTitle>
                <ParkPlot />
                <Legend $l={22} $t={216} $w={250} $h={69}>
                  <LegendRow><Check $c="#58b4d0"><Tick /></Check>Percent of Enabled Cores</LegendRow>
                  <LegendRow><Check $c="#e0708a"><Tick /></Check>Percent of Parked Cores</LegendRow>
                </Legend>
              </ParkChart>
              <Splitter>•••</Splitter>
              <CoreTable>
                <HeadRow>
                  <RowHead />
                  <HeadCell $left>Name</HeadCell>
                  <HeadCell>Current</HeadCell>
                  <HeadCell>% Of Time In Enabled State</HeadCell>
                  <HeadCell>% Of Time In Parked State</HeadCell>
                </HeadRow>
                {corePct.map(([name, state, pct]) => {
                  const rest = Math.round((100 - pct) * 100) / 100;
                  return (
                    <CoreRow key={name}>
                      <RowHead />
                      <Cell $left>{name}</Cell>
                      <Cell $red={state === "Parked"}>{state}</Cell>
                      <Cell>
                        {pct >= 1 && <DataBar $c="#1badda" style={{ width: `${pct * 2.53}px` }} />}
                        <CellText>{pct}%</CellText>
                      </Cell>
                      <Cell>
                        {rest >= 1 && <DataBar $c="#fb6c46" style={{ width: `${rest * 2.41}px` }} />}
                        <CellText>{rest}%</CellText>
                      </Cell>
                    </CoreRow>
                  );
                })}
              </CoreTable>
              <TabBar $ml={4} $mt={4}>
                <Tab $w={147} $active>CPU Core Parking</Tab>
                <Tab $w={148}>CPU Temperature</Tab>
                <Tab $w={91}>CPU Load</Tab>
                <Tab $w={95}>CPU Clock</Tab>
                <Tab $w={129}>CPU Line Chart</Tab>
                <Tab $w={176}>CPU Hybrid Workload</Tab>
              </TabBar>
            </Dock>
            <Strip>
              <Slot $h={10}>•••</Slot>
              <Slot $h={28} $mt={8}><UndoIcon s={24} /></Slot>
              <Slot $h={12}><StripArrow /></Slot>
              <Slot $h={7} $rule />
              <Slot $h={34}><FaSyncAlt size={23} color="#2ba24a" /></Slot>
              <Slot $h={6} $rule />
              <Slot $h={34}><BarsIcon on={1} /></Slot>
              <Slot $h={34}><BarsIcon on={3} /></Slot>
              <Slot $h={34}><BarsIcon on={4} /></Slot>
              <Slot $h={3} $rule />
              <Slot $h={36}>
                <svg width="24" height="24" viewBox="0 0 24 24"><rect width="14" height="17" fill="#1e8fe6" /><rect x="15" width="9" height="17" fill="#2ba24a" /><rect y="18" width="14" height="6" fill="#e8532a" /><rect x="15" y="18" width="9" height="6" fill="#f5b312" /></svg>
              </Slot>
              <Slot $h={12}><StripArrow /></Slot>
              <Slot $h={12} $mt={9}><StripArrow $dim /></Slot>
            </Strip>
          </Workspace>
        </Content>
      </Main>
      <StatusBar>
        <StatusVersion>Version</StatusVersion>
        <span>5.1.0.0</span>
        <Copyright>Copyright © 2025 CoderBag LLC</Copyright>
      </StatusBar>
    </Stage>
  );
}
